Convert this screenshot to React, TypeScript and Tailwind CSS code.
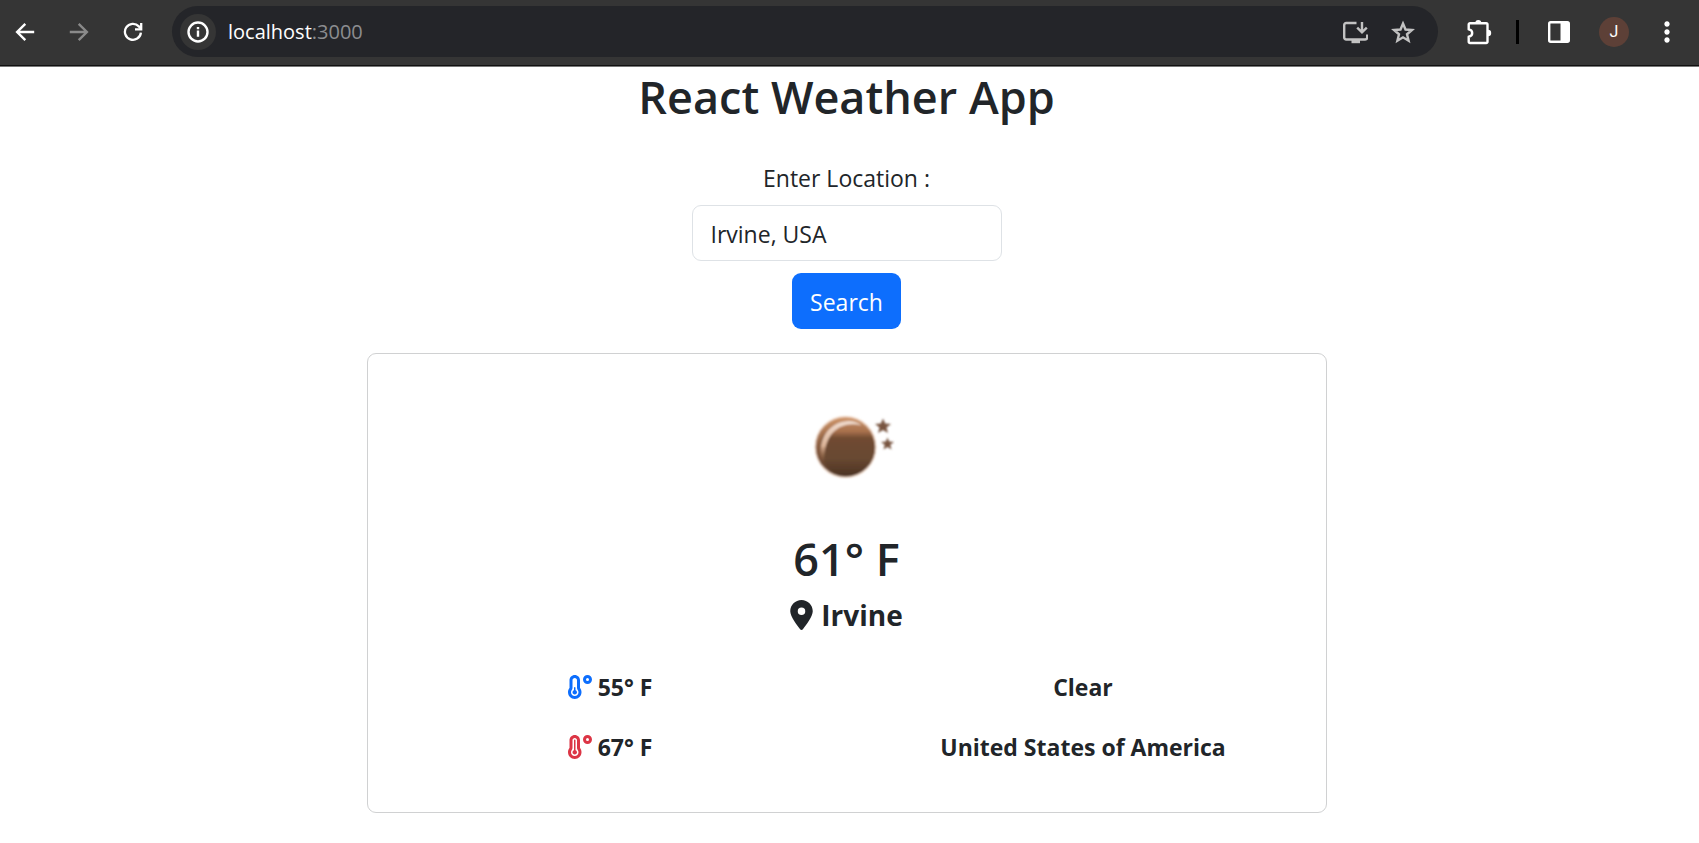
import React, { useState } from "react";
import { FaLocationDot, FaTemperatureHigh, FaTemperatureLow } from "react-icons/fa6";
import { MdMoreVert } from "react-icons/md";

function ArrowLeftIcon() {
  return (
    <svg viewBox="0 0 26 26" className="size-[26px]" fill="none" stroke="currentColor" strokeWidth="2.4" aria-hidden="true">
      <path d="M22.200 13H6M13.300 4.800L5.100 13l8.200 8.200" />
    </svg>
  );
}

function ArrowRightIcon() {
  return (
    <svg viewBox="0 0 26 26" className="size-[26px]" fill="none" stroke="currentColor" strokeWidth="2.4" aria-hidden="true">
      <path d="M3.800 13H20M12.700 4.800l8.200 8.200-8.200 8.200" />
    </svg>
  );
}

function ReloadIcon() {
  return (
    <svg viewBox="0 0 20 20" className="size-5" fill="none" stroke="currentColor" strokeWidth="2.3" aria-hidden="true">
      <path d="M17.9 10.6A8 8 0 1 1 15.8 4.4L18 6.8" />
      <path d="M18.2 1v6.4H12" />
    </svg>
  );
}

function InfoIcon() {
  return (
    <svg viewBox="0 0 22 22" className="size-[22px]" fill="none" stroke="currentColor" aria-hidden="true">
      <circle cx="11" cy="11" r="9.5" strokeWidth="2.4" />
      <path d="M11 9.6v6.2M11 6v2.2" strokeWidth="2.4" />
    </svg>
  );
}

function InstallIcon() {
  return (
    <svg viewBox="0 0 26 24" className="h-6 w-[26px]" fill="none" stroke="currentColor" strokeWidth="2.4" aria-hidden="true">
      <path d="M14.500 3H4.200A2 2 0 0 0 2.200 5v12.500a2 2 0 0 0 2 2h19a2 2 0 0 0 2-2V14.500" />
      <path d="M9.500 19.500v3.700h8.500v-3.700z" fill="currentColor" stroke="none" />
      <path d="M20 2v9.500M15.200 7.600L20 12.400l4.800-4.800" />
    </svg>
  );
}

function StarIcon() {
  return (
    <svg viewBox="0 0 26 26" className="size-[26px]" fill="none" stroke="currentColor" strokeWidth="2.4" aria-hidden="true">
      <path d="M13 4.500l2.500 6 6.500.5-5 4.300 1.600 6.400L13 18.300l-5.600 3.400L9 15.300 4 11l6.500-.5z" />
    </svg>
  );
}

function PuzzleIcon() {
  return (
    <svg viewBox="0 0 26 26" className="size-[26px]" aria-hidden="true">
      <path d="M4 4.200H20.200a1.300 1.300 0 0 1 1.300 1.300V22.700a1.300 1.300 0 0 1-1.300 1.300H4a1.300 1.300 0 0 1-1.300-1.300v-4.900c2.600-.4 3.500-1.900 3.500-3.700s-.9-3.300-3.500-3.700V5.500A1.300 1.300 0 0 1 4 4.200z" fill="none" stroke="currentColor" strokeWidth="2.400" strokeLinejoin="round" />
      <path d="M9.300 4a3 3 0 0 1 6 0zM22 10.800a3.200 3.200 0 0 1 0 6.400z" fill="currentColor" />
    </svg>
  );
}

function SidePanelIcon() {
  return (
    <svg viewBox="0 0 24 24" className="size-6" aria-hidden="true">
      <rect x="2.200" y="2.200" width="19.600" height="19.600" rx="1.500" fill="none" stroke="currentColor" strokeWidth="2.400" />
      <path d="M13.500 2H21v20h-7.500z" fill="currentColor" />
    </svg>
  );
}

function ClearNightIcon() {
  return (
    <svg viewBox="0 0 96 96" className="size-24" role="img" aria-label="Clear night">
      <defs>
        <linearGradient id="moonBody" x1="0" y1="0" x2="0" y2="1">
          <stop offset="0" stopColor="#c08a66" />
          <stop offset="0.200" stopColor="#a8714c" />
          <stop offset="0.320" stopColor="#704b32" />
          <stop offset="0.700" stopColor="#684830" />
          <stop offset="1" stopColor="#4c3324" />
        </linearGradient>
        <linearGradient id="moonRim" x1="0" y1="0" x2="0" y2="1">
          <stop offset="0" stopColor="#cf9568" />
          <stop offset="0.500" stopColor="#8a5d40" />
          <stop offset="1" stopColor="#533827" />
        </linearGradient>
        <linearGradient id="moonShine" x1="0" y1="0" x2="0" y2="1">
          <stop offset="0" stopColor="#f0dccf" />
          <stop offset="0.600" stopColor="#dcb498" />
          <stop offset="1" stopColor="#b07a56" stopOpacity="0" />
        </linearGradient>
        <filter id="soft" x="-20%" y="-20%" width="140%" height="140%">
          <feGaussianBlur stdDeviation="0.900" />
        </filter>
      </defs>
      <g filter="url(#soft)">
        <circle cx="46.500" cy="47" r="31" fill="#f4dccb" />
        <circle cx="46.500" cy="47" r="29.800" fill="url(#moonRim)" />
        <circle cx="48.500" cy="48" r="27.500" fill="url(#moonBody)" />
        <path d="M23.500 62C17 43 28 22 49 21c6-.2 10 1.500 13.500 4.500C45 20.500 24 30 25.500 62z" fill="url(#moonShine)" />
        <g fill="#785440">
          <path d="M84 18.500l2.200 5 5.800.4-4.500 3.500 1.500 5.600-5-3-5 3 1.500-5.600-4.500-3.500 5.800-.4z" />
          <path d="M88.500 37.500l1.700 4.100 4.800.3-3.700 2.900 1.200 4.700-4-2.600-4 2.600 1.200-4.700-3.700-2.900 4.800-.3z" />
        </g>
      </g>
    </svg>
  );
}

function BrowserBar() {
  return (
    <header className="flex h-[67px] items-center border-b border-[#777] bg-[#353535] pr-4 pb-[3px] pl-3 text-white shadow-[inset_0_-1px_0_#111]">
      <nav className="flex items-center gap-7" aria-label="Browser">
        <button type="button" aria-label="Back"><ArrowLeftIcon /></button>
        <button type="button" aria-label="Forward" className="text-[#8a8a8a]"><ArrowRightIcon /></button>
        <button type="button" aria-label="Reload" className="px-[3px]"><ReloadIcon /></button>
      </nav>
      <div className="ml-[26px] flex h-[51px] flex-1 items-center rounded-full bg-[#242529] pr-[22px] pl-2">
        <button type="button" aria-label="Site information" className="flex size-9 shrink-0 items-center justify-center rounded-full bg-[#353535]">
          <InfoIcon />
        </button>
        <p className="ml-3 flex-1 font-['Open_Sans','Noto_Sans',sans-serif] text-[20px] leading-7">
          localhost<span className="text-[#8c8d90]">:3000</span>
        </p>
        <div className="flex items-center gap-[22px] text-[#c2c2c2]">
          <button type="button" aria-label="Install app"><InstallIcon /></button>
          <button type="button" aria-label="Bookmark"><StarIcon /></button>
        </div>
      </div>
      <div className="ml-7 flex items-center">
        <button type="button" aria-label="Extensions"><PuzzleIcon /></button>
        <span className="ml-6 h-6 w-[3px] bg-black" />
        <button type="button" aria-label="Side panel" className="ml-7"><SidePanelIcon /></button>
        <button type="button" aria-label="Profile" className="ml-7 size-[30px] rounded-full bg-[#5d4037] font-['Roboto',sans-serif] text-base">J</button>
        <button type="button" aria-label="Menu" className="ml-[22px]"><MdMoreVert className="size-8" /></button>
      </div>
    </header>
  );
}

export default function App() {
  const [location, setLocation] = useState("Irvine, USA");
  return (
    <div className="min-h-screen bg-white font-['Open_Sans','Noto_Sans',sans-serif] text-2xl text-[#212529]">
      <BrowserBar />
      <main className="flex flex-col items-center pr-1.5 pb-7">
        <h1 className="mt-[3px] text-[45px] leading-[54px] font-semibold">React Weather App</h1>
        <form className="mt-9 flex flex-col items-center" onSubmit={(e) => e.preventDefault()}>
          <label htmlFor="location" className="text-[23px] leading-9">Enter Location :</label>
          <input
            id="location"
            type="text"
            value={location}
            onChange={(e) => setLocation(e.target.value)}
            className="mt-[9px] h-14 w-[310px] rounded-[9px] border border-[#dee2e6] px-[18px] pt-0.5 text-[23px]"
          />
          <button type="submit" className="mt-3 h-14 rounded-[9px] bg-[#0d6efd] px-[18px] pt-0.5 text-[23px] text-white">Search</button>
        </form>
        <section className="mt-6 flex w-full max-w-[960px] flex-col items-center rounded-[9px] border border-[#d0d1d2] px-1.5 pt-[46px] pb-[47px]">
          <ClearNightIcon />
          <h2 className="mt-9 text-[45px] leading-[54px] font-semibold">61° F</h2>
          <h3 className="mt-[11px] flex items-center gap-2 text-[28px] leading-9 font-bold">
            <FaLocationDot className="h-[30px] w-[23px]" />
            Irvine
          </h3>
          <dl className="mt-9 grid w-full grid-cols-2 gap-y-6 text-center text-[23px] leading-9 font-bold">
            <div className="flex items-center justify-center gap-1.5">
              <FaTemperatureLow className="size-6 text-[#0d6efd]" aria-label="Low" />
              <dd>55° F</dd>
            </div>
            <dd>Clear</dd>
            <div className="flex items-center justify-center gap-1.5">
              <FaTemperatureHigh className="size-6 text-[#dc3545]" aria-label="High" />
              <dd>67° F</dd>
            </div>
            <dd>United States of America</dd>
          </dl>
        </section>
      </main>
    </div>
  );
}
